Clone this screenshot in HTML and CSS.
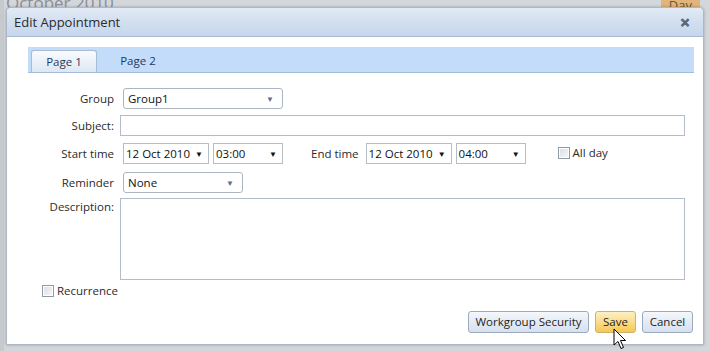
FILE: index.html
```html
<!DOCTYPE html>
<html lang="en">
<head>
    <meta charset="UTF-8">
    <title>Edit Appointment</title>
    <link rel="stylesheet" href="styles.css">
</head>
<body>

    <div class="app">
        <div class="app-header">
            <span class="month">October 2010</span>
            <span class="view-tab">Day</span>
        </div>
    </div>

    <div class="dialog">
        <div class="titlebar">
            <span class="title">Edit Appointment</span>
            <span class="close">&#x2715;</span>
        </div>

        <div class="dialog-body">
            <div class="tabs">
                <div class="tab active">Page 1</div>
                <div class="tab">Page 2</div>
            </div>

            <div class="form">
                <div class="row row-group">
                    <label class="lbl">Group</label>
                    <div class="combo combo-group">Group1<span class="arrow soft">&#9660;</span></div>
                </div>

                <div class="row row-subject">
                    <label class="lbl">Subject:</label>
                    <div class="textbox"></div>
                </div>

                <div class="row row-time">
                    <label class="lbl">Start time</label>
                    <div class="combo square combo-date">12 Oct 2010<span class="arrow">&#9660;</span></div>
                    <div class="combo square combo-hour">03:00<span class="arrow">&#9660;</span></div>
                    <label class="lbl-end">End time</label>
                    <div class="combo square combo-date">12 Oct 2010<span class="arrow">&#9660;</span></div>
                    <div class="combo square combo-hour">04:00<span class="arrow">&#9660;</span></div>
                    <span class="check check-allday"><span class="box"></span>All day</span>
                </div>

                <div class="row row-reminder">
                    <label class="lbl">Reminder</label>
                    <div class="combo combo-reminder">None<span class="arrow soft">&#9660;</span></div>
                </div>

                <div class="row row-desc">
                    <label class="lbl">Description:</label>
                    <div class="textarea"></div>
                </div>
            </div>

            <span class="check check-recur"><span class="box"></span>Recurrence</span>

            <div class="buttons">
                <button class="btn btn-security">Workgroup Security</button>
                <button class="btn btn-save">Save</button>
                <button class="btn btn-cancel">Cancel</button>
            </div>
        </div>

        <svg class="cursor" width="14" height="22" viewBox="0 0 14 22">
            <path d="M1 1 L1 17 L5 13.5 L8 20.5 L10.5 19.5 L7.5 12.5 L12.5 12.5 Z" fill="#fff" stroke="#000" stroke-width="1" stroke-linejoin="round"/>
        </svg>
    </div>

</body>
</html>
```

FILE: styles.css
```css
* {
    margin: 0;
    padding: 0;
    box-sizing: border-box;
}

body {
    width: 710px;
    height: 351px;
    overflow: hidden;
    background: #d3d6da;
    font-family: "Open Sans", "Noto Sans", Arial, sans-serif;
    font-size: 11.5px;
    color: #1e1e1e;
    position: relative;
}

/* app behind the dialog */
.app {
    height: 351px;
    border-left: 4px solid #c6c9cd;
}

.app-header {
    display: flex;
    justify-content: space-between;
    height: 12px;
    overflow: hidden;
}

.month {
    font-size: 17px;
    color: #8a8f96;
    line-height: 12px;
    margin-top: -3px;
    padding-left: 2px;
}

.view-tab {
    background: #e0b47a;
    color: #6d5535;
    font-size: 13px;
    line-height: 10px;
    padding: 0 8px;
    margin-right: 10px;
    border-radius: 0 0 2px 2px;
}

/* dialog */
.dialog {
    position: absolute;
    left: 6px;
    top: 7px;
    width: 698px;
    height: 338px;
    background: #fff;
    border: 1px solid #aeb8c4;
    border-radius: 5px 5px 0 0;
    box-shadow: 0 0 3px rgba(0, 0, 0, 0.25);
}

.titlebar {
    height: 29px;
    display: flex;
    align-items: center;
    justify-content: space-between;
    padding: 0 12px 0 7px;
    background: linear-gradient(#e2ebf6, #d3e0f0 45%, #c6d6eb);
    border-bottom: 1px solid #a9bad0;
    border-radius: 4px 4px 0 0;
}

.title {
    font-size: 13px;
    color: #2b2b2b;
}

.close {
    font-size: 12px;
    font-weight: bold;
    color: #5d6874;
    margin-right: 1px;
    -webkit-text-stroke: 0.6px #5d6874;
}

.dialog-body {
    padding: 10px 0 0 21px;
}

.tabs {
    display: flex;
    height: 26px;
    width: 666px;
    background: #c3dcfa;
    border-bottom: 1px solid #a4bcd8;
    padding: 3px 0 0 3px;
}

.tab {
    width: 66px;
    text-align: center;
    line-height: 22px;
    color: #1d3a5c;
    padding-left: 12px;
}

.tab.active {
    padding-left: 0;
    background: linear-gradient(#f9fbfe, #dde7f3);
    border: 1px solid #a8bcd4;
    border-bottom: none;
    border-radius: 3px 3px 0 0;
    margin-right: 2px;
}

/* form rows */
.form {
    margin-top: 15px;
}

.row {
    display: flex;
    align-items: center;
}

.lbl {
    width: 86px;
    text-align: right;
    color: #2a2a2a;
}

.row-group { height: 21px; }
.row-subject { height: 21px; margin-top: 6px; }
.row-time { height: 21px; margin-top: 7px; }
.row-reminder { height: 21px; margin-top: 8px; }
.row-desc { margin-top: 6px; align-items: flex-start; }

.combo {
    position: relative;
    height: 21px;
    line-height: 19px;
    padding-left: 4px;
    border: 1px solid #abb6c4;
    border-radius: 3px;
    background: #fff;
    margin-left: 9px;
    color: #111;
}

.combo.square {
    border-radius: 0;
    border-color: #b4bdc8;
    padding-left: 2px;
}

.arrow {
    position: absolute;
    right: 5px;
    top: 0;
    font-size: 8px;
    color: #111;
}

.arrow.soft {
    color: #5f6f86;
    right: 8px;
}

.combo-group { width: 160px; }
.combo-reminder { width: 120px; }
.combo-date { width: 86px; }
.combo-hour { width: 70px; margin-left: 4px; }

.lbl-end {
    margin-left: 28px;
    color: #2a2a2a;
}

.row-time .lbl-end + .combo {
    margin-left: 7px;
}

.textbox {
    height: 21px;
    width: 565px;
    margin-left: 6px;
    border: 1px solid #b3bcc8;
}

.textarea {
    height: 82px;
    width: 565px;
    margin-left: 6px;
    border: 1px solid #b3bcc8;
    margin-top: -1px;
}

.check {
    display: inline-flex;
    align-items: center;
    gap: 3px;
    color: #2a2a2a;
}

.box {
    width: 12px;
    height: 12px;
    border: 1px solid #8f9aa6;
    background: linear-gradient(135deg, #d9dde2, #f7f8f9);
    box-shadow: inset 0 0 0 1px #fff;
}

.check-allday {
    margin-left: 32px;
    margin-top: -2px;
}

.check-recur {
    margin: 3px 0 0 14px;
}

/* buttons */
.buttons {
    display: flex;
    justify-content: flex-end;
    gap: 6px;
    width: 665px;
    margin-top: 11px;
}

.btn {
    font-family: inherit;
    font-size: 11.5px;
    height: 22px;
    color: #1e1e1e;
    border: 1px solid #9aabc0;
    border-radius: 3px;
    background: linear-gradient(#f5f8fc, #e4ebf4 50%, #d7e1ee);
}

.btn-security { width: 121px; }
.btn-save {
    width: 41px;
    border-color: #d2b26a;
    background: linear-gradient(#fdf0c4, #fbdc8c 50%, #f6c655);
}
.btn-cancel { width: 51px; }

.cursor {
    position: absolute;
    left: 606px;
    top: 320px;
}
```
